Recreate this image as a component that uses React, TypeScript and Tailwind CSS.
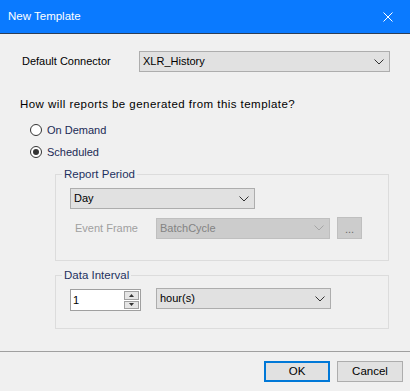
import React from "react";

const font = { fontFamily: '"Liberation Sans", Arial, sans-serif' };

function Chevron({ color }: { color: string }) {
  return (
    <svg width="10" height="6" viewBox="0 0 10 6" className="shrink-0">
      <path d="M0.5 0.5 L5 5 L9.5 0.5" fill="none" stroke={color} strokeWidth="1" />
    </svg>
  );
}

function Combo({
  value,
  width,
  disabled,
}: {
  value: string;
  width: string;
  disabled?: boolean;
}) {
  return (
    <div
      className={`flex items-center justify-between border pl-[3px] pr-[5px] text-[11px] ${width} ${
        disabled
          ? "h-[21px] border-[#bfbfbf] bg-[#cccccc] text-[#838383]"
          : "h-[21px] border-[#adadad] bg-[#e1e1e1] text-black"
      }`}
    >
      <span>{value}</span>
      <Chevron color={disabled ? "#a6a6a6" : "#333333"} />
    </div>
  );
}

function Radio({ label, checked }: { label: string; checked?: boolean }) {
  return (
    <div className="flex h-[16px] items-center pl-[10px]">
      <div className="flex h-[12px] w-[12px] items-center justify-center rounded-full border border-[#333333] bg-white">
        {checked && <div className="h-[6px] w-[6px] rounded-full bg-[#333333]" />}
      </div>
      <span className="ml-[5px] text-[11px] text-[#1b2a55]">{label}</span>
    </div>
  );
}

export default function App() {
  return (
    <div className="flex min-h-[391px] w-[410px] flex-col bg-[#f0f0f0]" style={font}>
      <div className="flex h-[34px] items-center justify-between border-b border-[#2d3e55] bg-[#0a7aff] pl-[8px] pr-[17px]">
        <span className="text-[11.5px] text-white">New Template</span>
        <svg width="10" height="10" viewBox="0 0 10 10">
          <path d="M0.5 0.5 L9.5 9.5 M9.5 0.5 L0.5 9.5" stroke="white" strokeWidth="1" />
        </svg>
      </div>

      <div className="mt-[17px] flex h-[21px] items-center pl-[22px]">
        <span className="w-[117px] text-[11px] text-black">Default Connector</span>
        <Combo value="XLR_History" width="w-[251px]" />
      </div>

      <div className="mt-[24px] h-[16px] pl-[20px] text-[11.5px] leading-[16px] tracking-[0.45px] text-black">
        How will reports be generated from this template?
      </div>

      <div className="mt-[10px] pl-[20px]">
        <Radio label="On Demand" />
        <div className="mt-[6px]">
          <Radio label="Scheduled" checked />
        </div>
      </div>

      <div className="relative ml-[55px] mt-[14px] w-[334px] border border-[#dcdcdc] pb-[21px] pl-[14px] pt-[13px]">
        <span className="absolute left-[6px] top-[-8px] bg-[#f0f0f0] px-[2px] text-[11.5px] leading-[14px] text-[#1e3060]">
          Report Period
        </span>
        <Combo value="Day" width="w-[185px]" />
        <div className="mt-[8px] flex h-[22px] items-center">
          <span className="w-[86px] pl-[5px] text-[11px] text-[#a0a0a0]">Event Frame</span>
          <Combo value="BatchCycle" width="w-[174px]" disabled />
          <div className="ml-[7px] flex h-[22px] w-[25px] items-end justify-center border border-[#bfbfbf] bg-[#cccccc] pb-[4px] text-[11px] leading-[10px] text-[#6b6b6b]">
            ...
          </div>
        </div>
      </div>

      <div className="relative ml-[55px] mt-[14px] w-[334px] border border-[#dcdcdc] pb-[17px] pl-[14px] pt-[12px]">
        <span className="absolute left-[6px] top-[-8px] bg-[#f0f0f0] px-[2px] text-[11.5px] leading-[14px] text-[#1e3060]">
          Data Interval
        </span>
        <div className="flex items-start">
          <div className="mt-[1px] flex h-[22px] w-[71px] items-center border border-[#a0a0a0] bg-white pl-[2px] pr-[1px]">
            <span className="flex-1 text-[11px] text-black">1</span>
            <div className="flex h-[18px] w-[15px] flex-col gap-[1px]">
              <div className="flex flex-1 items-center justify-center border border-[#a0a0a0] bg-[#e5e5e5]">
                <svg width="5" height="3" viewBox="0 0 5 3">
                  <path d="M0 3 L2.5 0 L5 3 Z" fill="#333" />
                </svg>
              </div>
              <div className="flex flex-1 items-center justify-center border border-[#a0a0a0] bg-[#e5e5e5]">
                <svg width="5" height="3" viewBox="0 0 5 3">
                  <path d="M0 0 L2.5 3 L5 0 Z" fill="#333" />
                </svg>
              </div>
            </div>
          </div>
          <div className="ml-[15px]">
            <Combo value="hour(s)" width="w-[175px]" />
          </div>
        </div>
      </div>

      <div className="mt-[22px] h-px w-full bg-[#a0a0a0]" />

      <div className="mt-[9px] flex justify-end gap-[7px] pr-[7px]">
        <div className="flex h-[21px] w-[66px] items-center justify-center border-2 border-[#0078d7] bg-[#e1e1e1] text-[11.5px] text-black">
          OK
        </div>
        <div className="flex h-[21px] w-[66px] items-center justify-center border border-[#adadad] bg-[#e1e1e1] text-[11.5px] text-black">
          Cancel
        </div>
      </div>
    </div>
  );
}
